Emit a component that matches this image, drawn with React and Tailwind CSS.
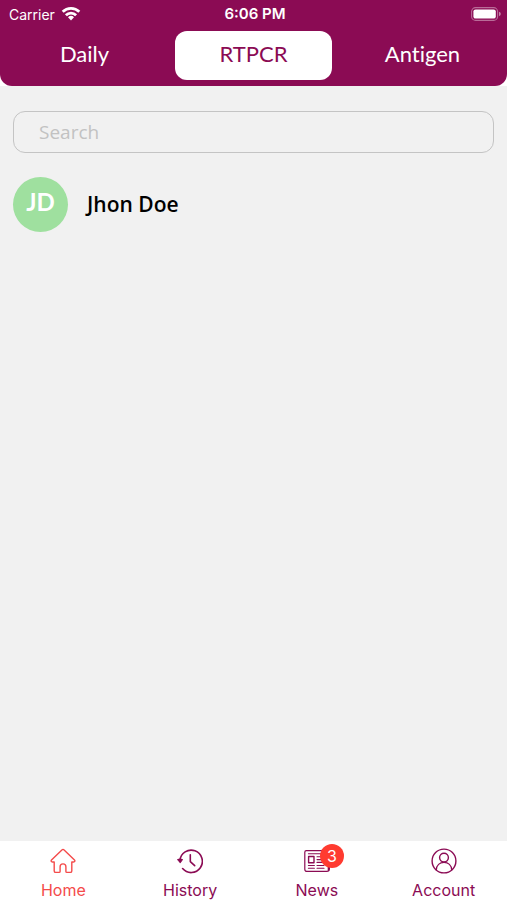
import React, { useState } from 'react';
import clsx from 'clsx';

const TESTS = ['Daily', 'RTPCR', 'Antigen'];

const PATIENTS = [{ id: 1, name: 'Jhon Doe', initials: 'JD' }];

const WifiIcon = () => (
  <svg className="w-5 h-4" viewBox="0 0 20 16" fill="none" stroke="currentColor" strokeWidth="2.8" aria-hidden="true">
    <path d="M1.7 5.8a11.8 11.8 0 0 1 16.6 0" />
    <path d="M4.9 9.2a7.2 7.2 0 0 1 10.2 0" />
    <path d="M10 14.4l-3-3.1a4.3 4.3 0 0 1 6 0z" fill="currentColor" stroke="none" />
  </svg>
);

const BatteryIcon = () => (
  <svg className="w-[30px] h-[14px]" viewBox="0 0 30 14" aria-hidden="true">
    <rect x="0.6" y="0.6" width="26" height="12.8" rx="4" fill="none" stroke="#fff" strokeOpacity="0.4" strokeWidth="1.1" />
    <rect x="2.4" y="2.4" width="22.4" height="9.2" rx="2.2" fill="#fff" />
    <path d="M28 4.8q1.8 0.6 1.8 2.2t-1.8 2.2z" fill="#fff" fillOpacity="0.5" />
  </svg>
);

const iconProps = {
  className: 'size-[26px]',
  viewBox: '0 0 26 26',
  fill: 'none',
  stroke: 'currentColor',
  strokeWidth: 1.4,
  strokeLinejoin: 'round',
  strokeLinecap: 'round',
  'aria-hidden': true
};

const HomeIcon = () => (
  <svg {...iconProps}>
    <path d="M11.9 1.9L1.5 12c-.8.9-.4 2 .9 2h1.8v8.9c0 1 .5 1.5 1.5 1.5h3.4c.7 0 1-.3 1-1v-4.6c0-1.9 1-2.9 2.9-2.9s2.9 1 2.9 2.9v4.6c0 .7.3 1 1 1h3.4c1 0 1.5-.5 1.5-1.5V14h1.8c1.3 0 1.7-1.1.9-2L14.1 1.9c-.7-.7-1.5-.7-2.2 0z" />
  </svg>
);

const HistoryIcon = () => (
  <svg {...iconProps}>
    <path d="M3 12.4A11.2 11.2 0 1 1 5.6 20.6" strokeWidth="1.6" />
    <path d="M.9 11.6q2.1-1 4.3 0l-2 2.8z" fill="currentColor" />
    <path d="M13.3 6.8v6.8l4.4 4" strokeWidth="1.6" />
  </svg>
);

const NewsIcon = () => (
  <svg {...iconProps}>
    <path d="M24.3 21.8V4.2c0-1-.6-1.6-1.6-1.6H2.3C1.4 2.6.8 3.2.8 4.2v17c0 1.3.9 2.2 2.2 2.2h19.8c1.7 0 2.6-1.1 2.6-2.6V7" strokeWidth="1.2" />
    <rect x="4.6" y="8.5" width="5.4" height="6.2" />
    <path d="M4.4 5.7h15.2M13 8.8h7M13 11.6h7M13 14.4h7M4.4 17.5h6M13 17.5h7M4.4 20.3h6M13 20.3h7" strokeWidth="1.1" />
  </svg>
);

const AccountIcon = () => (
  <svg {...iconProps}>
    <circle cx="13" cy="13" r="11.9" />
    <circle cx="13" cy="9.6" r="4.4" />
    <path d="M5.3 21.8c.3-4.4 3.4-7.4 7.7-7.4s7.4 3 7.7 7.4" />
  </svg>
);

const NAV_ITEMS = [
  { label: 'Home', Icon: HomeIcon },
  { label: 'History', Icon: HistoryIcon },
  { label: 'News', Icon: NewsIcon, badge: 3 },
  { label: 'Account', Icon: AccountIcon }
];

const StatusBar = () => (
  <div className="flex items-center h-7 pl-[9px] pr-[6px] text-white font-['Inter',sans-serif]">
    <div className="flex flex-1 items-center gap-1.5 text-[14px]">
      <span>Carrier</span>
      <WifiIcon />
    </div>
    <span className="text-[15px] font-semibold">6:06 PM</span>
    <div className="flex flex-1 justify-end">
      <BatteryIcon />
    </div>
  </div>
);

const App = () => {
  const [test, setTest] = useState('RTPCR');
  const [page, setPage] = useState('Home');
  const [query, setQuery] = useState('');

  const patients = PATIENTS.filter(p => p.name.toLowerCase().includes(query.toLowerCase()));

  return (
    <div className="flex flex-col min-h-screen bg-[#f1f1f1] font-['Lato',sans-serif]">
      <header className="bg-white">
        <div className="bg-[#8b0b54] rounded-b-xl pb-[6px]">
          <StatusBar />
          <div className="grid grid-cols-3 gap-3 px-1.5 pt-[3px]">
            {TESTS.map(name => (
              <button
                key={name}
                type="button"
                onClick={() => setTest(name)}
                className={clsx(
                  'h-[49px] pb-1 rounded-xl text-[22px] [font-variant-ligatures:none]',
                  test === name ? 'bg-white text-[#8b0b54]' : 'text-white'
                )}
              >
                {name}
              </button>
            ))}
          </div>
        </div>
      </header>

      <main className="flex-1 px-[13px] pt-[25px]">
        <input
          type="text"
          aria-label="Search"
          placeholder="Search"
          value={query}
          onChange={e => setQuery(e.target.value)}
          className="block w-full h-[42px] px-[25px] rounded-xl border border-[#c4c4c4] bg-transparent text-[19px] text-black placeholder:text-[#c2c2c2] outline-none font-['Open_Sans',sans-serif]"
        />
        <ul className="mt-6">
          {patients.map(p => (
            <li key={p.id} className="flex items-center gap-[19px]">
              <span className="flex items-center justify-center size-[55px] pb-1.5 rounded-full bg-[#9fe09f] text-[24px] font-bold text-white">
                {p.initials}
              </span>
              <span className="text-[21px] font-semibold text-black font-['Open_Sans',sans-serif]">{p.name}</span>
            </li>
          ))}
        </ul>
      </main>

      <nav className="grid grid-cols-4 h-[59px] bg-white font-['Inter',sans-serif]">
        {NAV_ITEMS.map(({ label, Icon, badge }) => (
          <button
            key={label}
            type="button"
            onClick={() => setPage(label)}
            className={clsx(
              'flex flex-col items-center pt-[7px] gap-1.5 text-[16px] leading-5',
              page === label ? 'text-[#f44b4b]' : 'text-[#8b0b54]'
            )}
          >
            <span className="relative">
              <Icon />
              {badge && (
                <span className="absolute -top-1 left-4 flex items-center justify-center size-6 rounded-full bg-[#ff3b30] text-white">
                  {badge}
                </span>
              )}
            </span>
            {label}
          </button>
        ))}
      </nav>
    </div>
  );
};

export default App;
